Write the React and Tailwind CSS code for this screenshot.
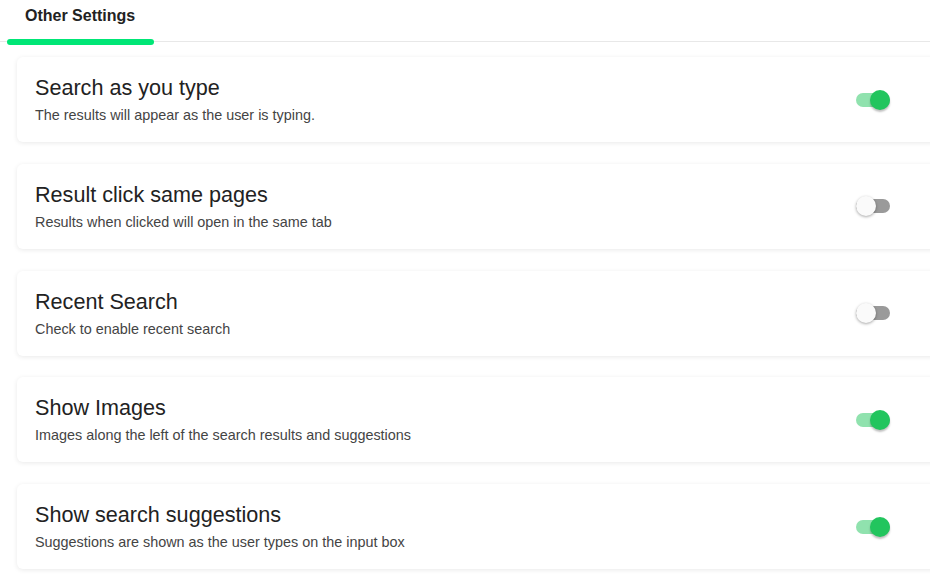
import React, { useState } from "react";

const settings = [
  { title: "Search as you type", desc: "The results will appear as the user is typing.", on: true },
  { title: "Result click same pages", desc: "Results when clicked will open in the same tab", on: false },
  { title: "Recent Search", desc: "Check to enable recent search", on: false },
  { title: "Show Images", desc: "Images along the left of the search results and suggestions", on: true },
  { title: "Show search suggestions", desc: "Suggestions are shown as the user types on the input box", on: true },
];

function Toggle({ on, onChange }) {
  return (
    <button
      type="button"
      onClick={onChange}
      className="relative flex h-[20px] w-[34px] shrink-0 items-center"
    >
      <span
        className={
          on
            ? "h-[14px] w-[34px] rounded-full bg-[#22c55e]/50"
            : "h-[14px] w-[34px] rounded-full bg-[#9a9a9a]"
        }
      />
      <span
        className={
          on
            ? "absolute left-[14px] top-0 h-[20px] w-[20px] rounded-full bg-[#22c55e] shadow-[0_2px_2px_rgba(0,0,0,0.25)]"
            : "absolute left-0 top-0 h-[20px] w-[20px] rounded-full bg-[#fafafa] shadow-[0_1px_3px_rgba(0,0,0,0.35)]"
        }
      />
    </button>
  );
}

export default function App() {
  const [items, setItems] = useState(settings);
  const flip = (i) =>
    setItems((prev) => prev.map((s, j) => (j === i ? { ...s, on: !s.on } : s)));

  return (
    <div className="h-[575px] w-[930px] overflow-hidden bg-white font-['Liberation_Sans',Arial,sans-serif]">
      <div className="relative h-[42px] border-b border-[#e8e8e8]">
        <div className="ml-[7px] flex h-[42px] w-[147px] flex-col">
          <div className="flex h-[32px] items-center pl-[18px] text-[16px] font-bold text-[#222]">
            Other Settings
          </div>
          <div className="mt-auto h-[6px] translate-y-[3px] rounded-full bg-[#00e676]" />
        </div>
      </div>
      <div className="flex flex-col gap-[21.75px] pl-[17px] pt-[15px]">
        {items.map((s, i) => (
          <div
            key={s.title}
            className="flex h-[85px] w-[930px] items-center rounded-[6px] bg-white pl-[18px] pr-[57px] shadow-[0_1px_5px_rgba(0,0,0,0.09)]"
          >
            <div className="flex flex-col">
              <div className="text-[21.6px] leading-[26px] text-[#222]">{s.title}</div>
              <div className="mt-[5px] text-[14.4px] leading-[18px] text-[#444]">{s.desc}</div>
            </div>
            <div className="ml-auto">
              <Toggle on={s.on} onChange={() => flip(i)} />
            </div>
          </div>
        ))}
      </div>
    </div>
  );
}
